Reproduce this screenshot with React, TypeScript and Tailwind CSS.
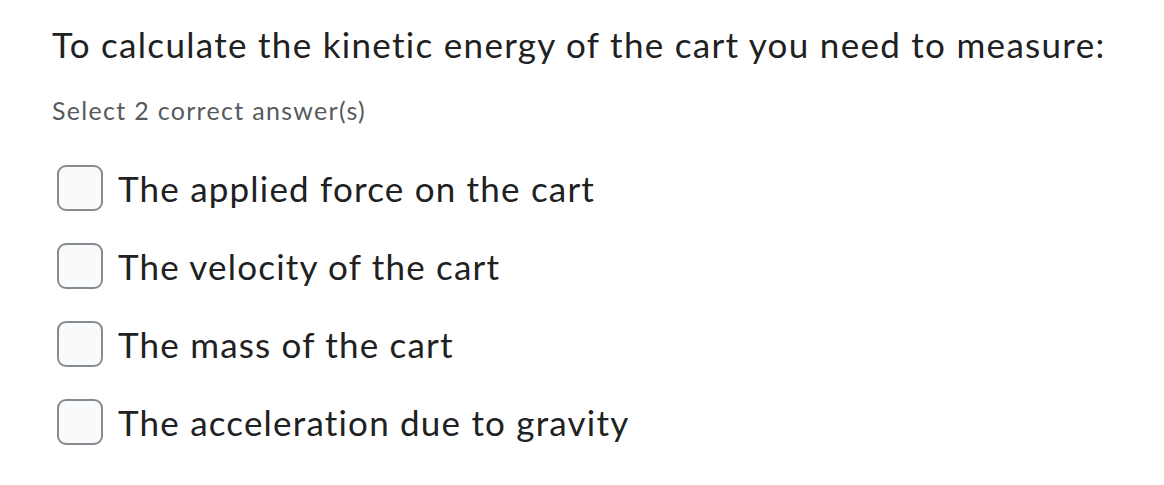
const options = [
  "The applied force on the cart",
  "The velocity of the cart",
  "The mass of the cart",
  "The acceleration due to gravity",
];

export default function App() {
  return (
    <div className="min-h-screen bg-white pl-[52px] pt-[21px] text-[#202122]" style={{ fontFamily: "Lato, 'Open Sans', sans-serif" }}>
      <h1 className="text-[35px] leading-[46px] font-normal tracking-[1.3px]">
        To calculate the kinetic energy of the cart you need to measure:
      </h1>
      <p className="mt-[28px] text-[25px] leading-[30px] tracking-[1.3px] text-[#565a5c]">Select 2 correct answer(s)</p>
      <div className="mt-[40px] flex flex-col gap-[32px] pl-[5px]">
        {options.map((opt) => (
          <label key={opt} className="flex items-center gap-[15px]">
            <span className="h-[46px] w-[46px] shrink-0 rounded-[9px] border-2 border-[#868b90] bg-[#f9fafc]" />
            <span className="text-[35px] leading-[46px] tracking-[1.2px]">{opt}</span>
          </label>
        ))}
      </div>
    </div>
  );
}
